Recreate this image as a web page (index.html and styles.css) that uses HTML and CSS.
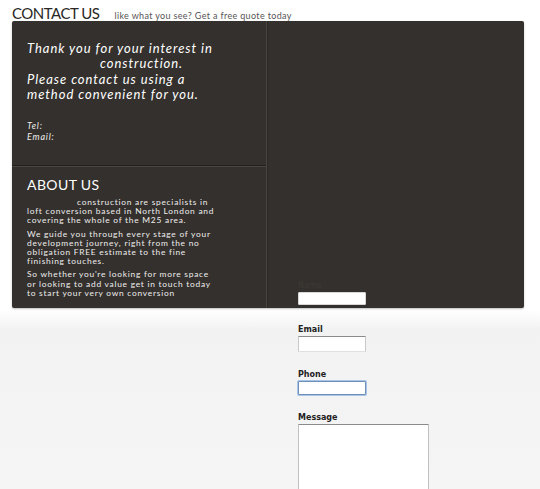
FILE: index.html
```html
<!DOCTYPE html>
<html lang="en">
<head>
  <meta charset="UTF-8">
  <meta name="viewport" content="width=device-width, initial-scale=1.0">
  <title>Contact Us</title>
  <link rel="stylesheet" href="styles.css">
</head>
<body>
  <div class="page">
    <div class="header">
      <h1>CONTACT US</h1>
      <span class="tagline">like what you see? Get a free quote today</span>
    </div>

    <div class="panel">
      <div class="panel-left">
        <div class="thanks">
          <p class="thanks-text">Thank you for your interest in<br><span class="name-gap"></span>construction.<br>Please contact us using a<br>method convenient for you.</p>
          <p class="contact-line">Tel:</p>
          <p class="contact-line">Email:</p>
        </div>
        <div class="about">
          <h2>ABOUT US</h2>
          <p><span class="name-gap small"></span>construction are specialists in loft conversion based in North London and covering the whole of the M25 area.</p>
          <p>We guide you through every stage of your development journey, right from the no obligation FREE estimate to the fine finishing touches.</p>
          <p>So whether you're looking for more space or looking to add value get in touch today to start your very own conversion</p>
        </div>
      </div>
      <div class="panel-right"></div>
    </div>

    <!-- quote form sits over the bottom of the panel -->
    <form class="quote-form" method="post" action="/contact">
      <label for="name" class="on-dark">Name</label>
      <input type="text" id="name" name="name" class="field field-name">

      <label for="email">Email</label>
      <input type="email" id="email" name="email" class="field field-email">

      <label for="phone">Phone</label>
      <input type="text" id="phone" name="phone" class="field field-phone">

      <label for="message">Message</label>
      <textarea id="message" name="message" class="field field-message"></textarea>
    </form>
  </div>
</body>
</html>
```

FILE: styles.css
```css
html, body {
  margin: 0;
  padding: 0;
  height: 100%;
}

body {
  font-family: Lato, "Open Sans", Arial, sans-serif;
  background: linear-gradient(to bottom, #ffffff 0, #ffffff 310px, #f2f2f2 330px, #f5f5f5 100%);
  overflow: hidden;
}

.page {
  position: relative;
  width: 540px;
  height: 489px;
}

.header {
  display: flex;
  align-items: baseline;
  padding: 4px 12px 0;
  height: 17px;
}

h1 {
  margin: 0;
  font-size: 15px;
  font-weight: 400;
  color: #2a2826;
  letter-spacing: -0.5px;
}

.tagline {
  margin-left: 15px;
  font-size: 9px;
  color: #555;
  letter-spacing: 0.35px;
}

.panel {
  display: grid;
  grid-template-columns: 255px 1fr;
  margin: 0 16px 0 12px;
  height: 287px;
  background-color: #34302d;
  border-radius: 2px;
  box-shadow: 0 1px 2px rgba(0, 0, 0, 0.25);
  overflow: hidden;
}

.panel-left {
  display: flex;
  flex-direction: column;
  border-right: 1px solid #4a4642;
}

.panel-right {
  border-left: 1px solid #2a2724;
}

.thanks {
  box-sizing: border-box;
  height: 145px;
  padding: 20px 15px 0;
  border-bottom: 1px solid #221f1d;
  box-shadow: 0 1px 0 #4a4642;
  color: #fff;
}

.thanks-text {
  margin: 0 0 17px;
  font-size: 13px;
  font-style: italic;
  line-height: 15.4px;
  letter-spacing: 0.95px;
}

.name-gap {
  display: inline-block;
  width: 73px;
}

.name-gap.small {
  width: 50px;
}

.contact-line {
  margin: 0;
  font-size: 9px;
  font-style: italic;
  line-height: 11px;
  letter-spacing: 0.8px;
  color: #eee;
}

.about {
  padding: 10px 48px 0 15px;
  color: #eee;
}

h2 {
  margin: 0 0 5px;
  font-size: 14px;
  font-weight: 400;
  color: #fff;
  letter-spacing: 0.4px;
}

.about p {
  margin: 0 0 4px;
  font-size: 8.4px;
  line-height: 9.2px;
  letter-spacing: 0.75px;
}

.quote-form {
  position: absolute;
  left: 298px;
  top: 281px;
  display: flex;
  flex-direction: column;
  align-items: flex-start;
  font-family: "DejaVu Sans", Arial, sans-serif;
}

.quote-form label {
  font-size: 8px;
  font-weight: bold;
  color: #222;
  line-height: 10px;
  margin-bottom: 1px;
}

.quote-form label.on-dark {
  color: #3d3935;
  font-weight: normal;
}

.field {
  box-sizing: border-box;
  margin: 0 0 18px;
  padding: 0;
  background: #fff;
  border: 1px solid #a9a9a9;
  border-radius: 1px;
  font-size: 9px;
}

.field-name {
  width: 68px;
  height: 13px;
  margin-bottom: 20px;
  border-color: #d8d8d8;
}

.field-email {
  width: 68px;
  height: 16px;
  border-top-color: #8a8a8a;
  border-left-color: #c8c8c8;
  border-right-color: #c8c8c8;
  border-bottom-color: #e0e0e0;
}

.field-phone {
  width: 68px;
  height: 14px;
  border: 1px solid #6d8fb8;
  box-shadow: 0 0 0 1px #a9c4e6;
}

.field-message {
  width: 131px;
  height: 80px;
  resize: none;
  border-top-color: #8a8a8a;
  border-left-color: #c0c0c0;
  border-right-color: #c0c0c0;
}
```
